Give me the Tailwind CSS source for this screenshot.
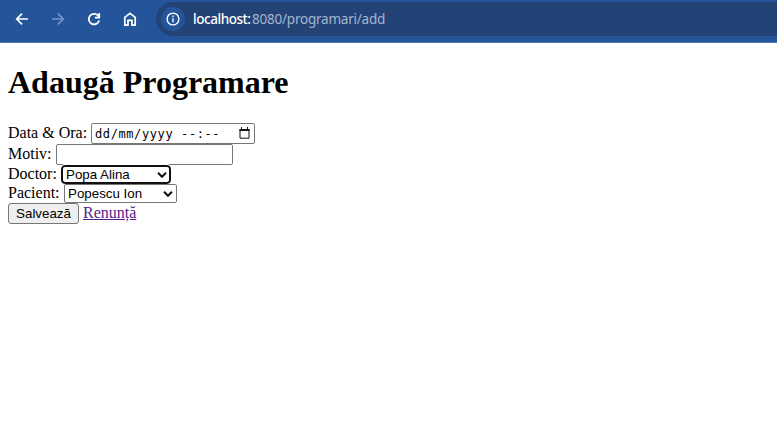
<!DOCTYPE html>
<html lang="ro">
<head>
<meta charset="utf-8">
<title>Adaugă Programare</title>
<script src="https://cdn.jsdelivr.net/npm/@tailwindcss/browser@4"></script>
</head>
<body class="h-screen overflow-hidden bg-white text-black font-['Liberation_Serif',serif] text-[16px]">
<header class="flex h-[43px] items-start border-b border-[#4a77b8] bg-[#24559b] pt-[2px] text-white">
  <nav class="flex h-[34px] w-[156px] shrink-0 items-center gap-[20px] pl-[14px]">
    <svg class="size-4" viewBox="0 0 16 16" fill="none" stroke="currentColor" stroke-width="1.7"><path d="M14 8H3M8 2.7 2.7 8 8 13.3"/></svg>
    <svg class="size-4 text-[#7696c5]" viewBox="0 0 16 16" fill="none" stroke="currentColor" stroke-width="1.7"><path d="M2 8h11M8 2.7 13.3 8 8 13.3"/></svg>
    <svg class="size-4" viewBox="0 0 16 16" fill="none" stroke="currentColor" stroke-width="1.8"><path d="M13.2 9.5A5.3 5.3 0 1 1 11.9 4.4L13.2 6M13.2 2v4.7H8.8"/></svg>
    <svg class="size-4" viewBox="0 0 16 16" fill="none" stroke="currentColor" stroke-width="1.7"><path d="M2.8 6.3 8 2.3l5.2 4v7.8H10V9.3H6v4.8H2.8Z"/></svg>
  </nav>
  <div class="flex h-[34px] flex-1 items-center rounded-l-full bg-[#234376] pl-[5px]">
    <span class="flex size-6 items-center justify-center rounded-full bg-[#24559b]">
      <svg class="size-[14px]" viewBox="0 0 14 14" fill="none" stroke="currentColor" stroke-width="1.4"><circle cx="7" cy="7" r="5.9"/><path d="M7 6.2v4.1M7 3.6v1.5"/></svg>
    </span>
    <span class="ml-[8px] font-['Noto_Sans',sans-serif] text-[13.5px] leading-[20px] tracking-[-0.22px] text-[#a3b5d0]"><span class="inline-block w-[59px] whitespace-nowrap font-medium tracking-[-0.45px] text-white">localhost:</span>8080/programari/add</span>
  </div>
</header>
<main class="pl-2">
  <h1 class="mt-[21px] mb-[22px] h-[37px] text-[32px] leading-[37px] font-bold">Adaugă Programare</h1>
  <form class="flex flex-col leading-[19px]">
    <div class="flex h-[21px] items-center">
      <label class="w-[83px] pb-[2px] whitespace-nowrap">Data &amp; Ora:</label>
      <div class="flex h-[21px] w-[164px] items-center justify-between rounded-[2px] border border-[#767676] pr-[4px] pl-[3px]">
        <span class="whitespace-pre pt-[2px] font-['DejaVu_Sans_Mono',monospace] text-[12px] tracking-[0.6px]">dd/mm/yyyy --:--</span>
        <svg class="mb-[2px] h-[12px] w-[11px]" viewBox="0 0 11 12" fill="none" stroke="#111"><path d="M1 2.5h9v8.7H1Z"/><path d="M.5 3h10" stroke-width="2"/><path d="M2.5 0v2M8.5 0v2"/></svg>
      </div>
    </div>
    <div class="flex h-[21px] items-center">
      <label class="w-[48px] pb-[2px] whitespace-nowrap">Motiv:</label>
      <input type="text" class="h-[21px] w-[177px] rounded-[2px] border border-[#767676]">
    </div>
    <div class="flex h-[19px] items-center">
      <label class="w-[53px] pb-[2px] whitespace-nowrap">Doctor:</label>
      <div class="flex h-[19px] w-[110px] items-center justify-between rounded-[4px] bg-white pr-[4px] pl-[5px] font-['Liberation_Sans',sans-serif] text-[13.333px] ring-2 ring-[#101010] outline outline-white ring-inset">
        <span>Popa Alina</span>
        <svg class="h-[6px] w-[10px]" viewBox="0 0 10 6" fill="none" stroke="#111" stroke-width="2"><path d="m1 .8 4 4 4-4"/></svg>
      </div>
    </div>
    <div class="flex h-[19px] items-center">
      <label class="w-[56px] pb-[2px] whitespace-nowrap">Pacient:</label>
      <div class="flex h-[19px] w-[113px] items-center justify-between rounded-[2px] border border-[#767676] pr-[3px] pl-[3px] font-['Liberation_Sans',sans-serif] text-[13.333px]">
        <span>Popescu Ion</span>
        <svg class="h-[6px] w-[10px]" viewBox="0 0 10 6" fill="none" stroke="#111" stroke-width="2"><path d="m1 .8 4 4 4-4"/></svg>
      </div>
    </div>
    <div class="flex h-[21px] items-center gap-[4px]">
      <button type="button" class="h-[21px] w-[71px] rounded-[3px] border border-[#767676] bg-[#efefef] font-['Liberation_Sans',sans-serif] text-[13.333px] leading-[19px]">Salvează</button>
      <a href="#" class="pb-[2px] text-[#551a8b] underline">Renunță</a>
    </div>
  </form>
</main>
</body>
</html>
